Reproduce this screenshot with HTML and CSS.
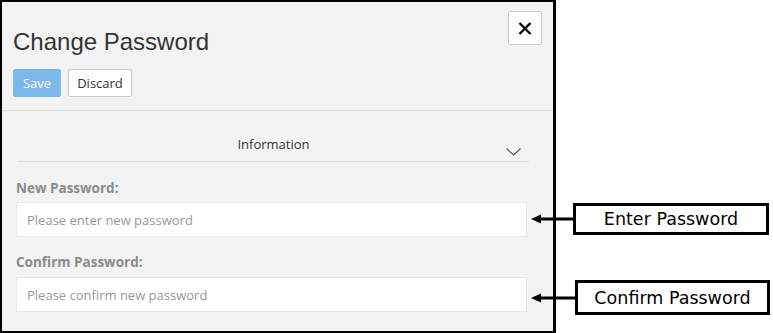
FILE: index.html
```html
<!DOCTYPE html>
<html lang="en">
<head>
    <meta charset="UTF-8">
    <title>Change Password</title>
    <link rel="stylesheet" href="styles.css">
</head>
<body>
    <div class="stage">
        <div class="panel">
            <div class="header">
                <h1 class="title">Change Password</h1>
                <div class="actions">
                    <button class="btn btn-save">Save</button>
                    <button class="btn btn-discard">Discard</button>
                </div>
                <button class="close" aria-label="Close">
                    <svg width="14" height="13" viewBox="0 0 14 13">
                        <path d="M1.5 1 L12.5 12 M12.5 1 L1.5 12" stroke="#000" stroke-width="2.3" fill="none"/>
                    </svg>
                </button>
            </div>
            <div class="body">
                <div class="section-head">
                    <span>Information</span>
                    <svg class="chevron" width="15" height="8" viewBox="0 0 15 8">
                        <polyline points="0.5,0.5 7.5,7 14.5,0.5" stroke="#555" stroke-width="1.1" fill="none"/>
                    </svg>
                </div>
                <div class="field">
                    <label>New Password:</label>
                    <input type="password" placeholder="Please enter new password">
                </div>
                <div class="field">
                    <label>Confirm Password:</label>
                    <input type="password" placeholder="Please confirm new password">
                </div>
            </div>
        </div>

        <!-- annotation callouts -->
        <div class="callout callout-enter">
            <svg class="arrow" width="42" height="12" viewBox="0 0 42 12">
                <polygon points="0,6 10,1.5 10,10.5" fill="#000"/>
                <rect x="9" y="4.5" width="33" height="3" fill="#000"/>
            </svg>
            <span class="callout-box box-enter">Enter Password</span>
        </div>
        <div class="callout callout-confirm">
            <svg class="arrow" width="44" height="12" viewBox="0 0 44 12">
                <polygon points="0,6 10,1.5 10,10.5" fill="#000"/>
                <rect x="9" y="4.5" width="35" height="3" fill="#000"/>
            </svg>
            <span class="callout-box box-confirm">Confirm Password</span>
        </div>
    </div>
</body>
</html>
```

FILE: styles.css
```css
body{
    margin: 0;
    background: #fff;
    font-family: "Open Sans", "Liberation Sans", sans-serif;
}
.stage{
    position: relative;
    width: 773px;
    height: 333px;
}
.panel{
    box-sizing: border-box;
    width: 556px;
    height: 333px;
    background: #f3f3f3;
    border: 2px solid #000;
    border-right-width: 3px;
}
.header{
    position: relative;
    padding: 26px 11px 13px;
    border-bottom: 1px solid #dcdcdc;
}
.title{
    margin: 0;
    font-family: "Liberation Sans", Arial, sans-serif;
    font-weight: normal;
    font-size: 24px;
    line-height: 28px;
    color: #333;
}
.actions{
    display: flex;
    gap: 7px;
    margin-top: 13px;
}
.btn{
    box-sizing: border-box;
    height: 28px;
    padding: 0;
    border-radius: 2px;
    font-family: "Open Sans", sans-serif;
    font-size: 13px;
}
.btn-save{
    width: 48px;
    background: #7ab8ea;
    border: 1px solid #7ab8ea;
    color: #fff;
}
.btn-discard{
    width: 64px;
    background: #fff;
    border: 1px solid #ccc;
    color: #333;
}
.close{
    position: absolute;
    top: 9px;
    right: 11px;
    box-sizing: border-box;
    width: 34px;
    height: 34px;
    padding: 0;
    background: #fff;
    border: 1px solid #ccc;
    border-radius: 2px;
    display: flex;
    align-items: center;
    justify-content: center;
}
.body{
    padding: 14px 24px 0 14px;
}
.section-head{
    position: relative;
    margin: 0 0 0 2px;
    height: 36px;
    line-height: 39px;
    text-align: center;
    font-size: 13px;
    color: #333;
    border-bottom: 1px solid #ddd;
}
.chevron{
    position: absolute;
    right: 8px;
    bottom: 5px;
}
.field{
    display: flex;
    flex-direction: column;
}
.field label{
    margin-top: 17px;
    font-weight: bold;
    font-size: 13.5px;
    line-height: 18px;
    color: #8a8a8a;
}
.field + .field label{
    margin-top: 16px;
}
.field input{
    box-sizing: border-box;
    width: 511px;
    height: 35px;
    margin-top: 5px;
    padding: 0 10px;
    background: #fff;
    border: 1px solid #e8e8e8;
    font-family: "Open Sans", sans-serif;
    font-size: 13px;
    outline: none;
}
.field + .field input{
    margin-top: 6px;
}
.field input::placeholder{
    color: #999;
}
.callout{
    position: absolute;
    display: flex;
    align-items: center;
}
.callout-enter{
    left: 531px;
    top: 203px;
}
.callout-confirm{
    left: 531px;
    top: 280px;
}
.callout-box{
    box-sizing: border-box;
    display: flex;
    align-items: center;
    justify-content: center;
    border: 3px solid #000;
    font-family: "DejaVu Sans", sans-serif;
    font-size: 17.5px;
    color: #000;
}
.box-enter{
    width: 196px;
    height: 32px;
}
.box-confirm{
    width: 195px;
    height: 35px;
}
```
